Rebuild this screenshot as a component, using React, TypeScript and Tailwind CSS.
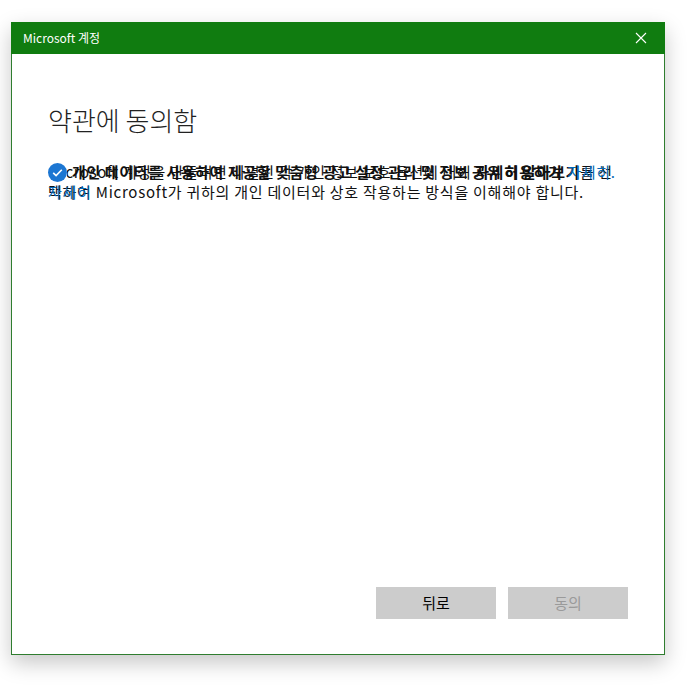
const CheckCircle = () => (
  <svg width="19" height="19" viewBox="0 0 19 19">
    <circle cx="9.5" cy="9.5" r="9.5" fill="#1c76d2" />
    <path
      d="M5.2 9.8 L8.1 12.6 L13.8 6.8"
      fill="none"
      stroke="#fff"
      strokeWidth="1.6"
    />
  </svg>
);

const CloseIcon = () => (
  <svg width="12" height="12" viewBox="0 0 12 12">
    <path d="M1 1 L11 11 M11 1 L1 11" stroke="#fff" strokeWidth="1.1" />
  </svg>
);

export default function App() {
  return (
    <div className="min-h-screen bg-white pl-[11px] pt-[22px] font-['Noto_Sans_CJK_KR',sans-serif]">
      <div className="flex h-[633px] w-[654px] flex-col border border-[#2f7d2f] bg-white shadow-[0_8px_20px_rgba(0,0,0,0.22)]">
        {/* title bar */}
        <div className="-mx-px -mt-px flex h-[32px] items-center justify-between bg-[#107c10] pl-[12px] pr-[18px] text-[12px] text-white">
          <span>Microsoft 계정</span>
          <CloseIcon />
        </div>

        <div className="flex flex-1 flex-col px-[36px] pb-[35px] pt-[50px]">
          <h1 className="text-[26px] font-light leading-[32px] text-[#222]">
            약관에 동의함
          </h1>

          <div className="relative mt-[26px] text-[15px] leading-[20px] tracking-[0.6px] text-[#111]">
            <p className="whitespace-nowrap">
              Microsoft 계정을 만들려면 나열된 각 개인 정보 보호 옵션에 대해{" "}
              <b className="font-bold">자세히 알아보기</b>를 선
              <br />
              <span className="tracking-[0.75px]">
                택하여 Microsoft가 귀하의 개인 데이터와 상호 작용하는 방식을
                이해해야 합니다.
              </span>
            </p>

            {/* overlapping checkbox row */}
            <div className="absolute left-0 top-0 flex items-center gap-[5px] whitespace-nowrap">
              <span className="bg-white">
                <CheckCircle />
              </span>
              <span className="font-bold text-[#111]">
                개인 데이터를 사용하여 제공할 맞춤형 광고 설정 관리 및 정보 공유 허용하기
              </span>
              <span className="text-[#0067b8]">자세히.</span>
            </div>
            <span className="absolute left-0 top-[20px] tracking-[0.75px] text-[#0067b8]">
              자세히
            </span>
          </div>

          <div className="flex-1" />

          <div className="flex justify-end gap-[12px]">
            <button className="h-[32px] w-[120px] bg-[#cccccc] text-[15px] text-black">
              뒤로
            </button>
            <button
              disabled
              className="h-[32px] w-[120px] bg-[#cccccc] text-[15px] text-[#9a9a9a]"
            >
              동의
            </button>
          </div>
        </div>
      </div>
    </div>
  );
}
